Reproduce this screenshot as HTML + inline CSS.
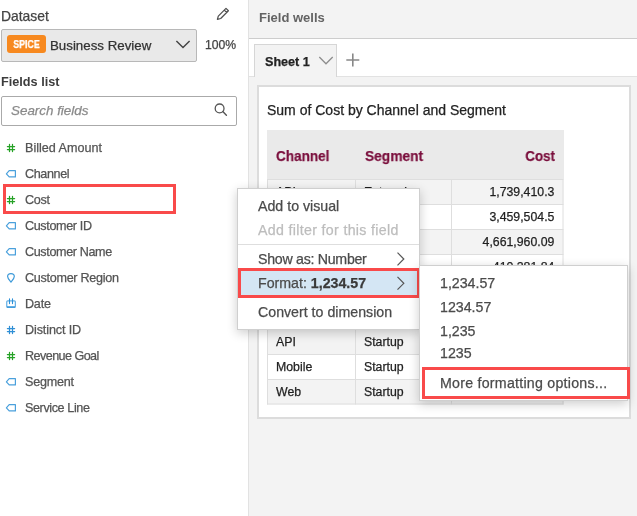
<!DOCTYPE html>
<html><head><meta charset="utf-8">
<style>
*{box-sizing:border-box;margin:0;padding:0}
html,body{width:637px;height:516px;overflow:hidden;background:#fff;font-family:"Liberation Sans",sans-serif}
.a,.fi,.cm,.hd,.td{will-change:transform;-webkit-text-stroke:0.25px currentColor}
.a{position:absolute;white-space:pre;line-height:1}
svg{position:absolute;overflow:visible}
#rp{position:absolute;left:249px;top:0;width:388px;height:516px;background:#f3f3f3}
.fi{position:absolute;left:25px;font-size:12.6px;margin-top:1px;color:#545454;line-height:1;white-space:pre}
.cm{position:absolute;font-size:14.2px;color:#4b4b4b;line-height:1;white-space:pre}
.hd{position:absolute;font-size:14.8px;transform-origin:0 0;font-weight:bold;color:#7a0e3c;line-height:1;white-space:pre}
.td{position:absolute;font-size:12.3px;color:#1f1f1f;line-height:1;white-space:pre}
</style></head><body>

<!-- left panel -->
<div class="a" style="left:1px;top:10.1px;font-size:13.9px;color:#444">Dataset</div>
<svg style="left:0;top:0" width="637" height="516">
  <!-- pencil -->
  <path d="M217.4 19.4 L218.3 16.1 L226 8.4 L228.4 10.8 L220.7 18.5 Z M224.3 10.1 L226.7 12.5" fill="none" stroke="#505050" stroke-width="1.25" stroke-linejoin="round"/>
</svg>
<div style="position:absolute;left:1px;top:29px;width:196px;height:33px;background:#e9e9e9;border:1px solid #b8b8b8;border-radius:2px"></div>
<div style="position:absolute;left:7px;top:35px;width:39px;height:18px;background:#f7891f;border-radius:3px"></div>
<div class="a" style="left:6.5px;top:39.6px;width:39px;text-align:center;font-size:10.2px;font-weight:bold;color:#fff;transform:scaleX(0.87)">SPICE</div>
<div class="a" style="left:50px;top:38.75px;font-size:13.3px;color:#333">Business Review</div>
<svg style="left:0;top:0" width="637" height="516">
  <polyline points="176.4,41 183,47.4 189.6,41" fill="none" stroke="#444" stroke-width="1.45"/>
</svg>
<div class="a" style="left:205px;top:39.1px;font-size:12.2px;color:#444">100%</div>
<div class="a" style="left:1px;top:75.95px;font-size:12.7px;font-weight:bold;color:#3c3c3c;-webkit-text-stroke:0">Fields list</div>
<div style="position:absolute;left:1px;top:96px;width:236px;height:30px;background:#fff;border:1px solid #aaaaaa;border-radius:2px"></div>
<div class="a" style="left:11px;top:104.45px;font-size:13.4px;font-style:italic;color:#8a8a8a">Search fields</div>
<svg style="left:0;top:0" width="637" height="516">
  <circle cx="219.6" cy="108.4" r="4.4" fill="none" stroke="#555" stroke-width="1.3"/>
  <line x1="222.8" y1="111.6" x2="226.4" y2="115.2" stroke="#555" stroke-width="1.4" stroke-linecap="round"/>
</svg>

<!-- field list -->
<div class="fi" style="top:141.4px;letter-spacing:0px">Billed Amount</div>
<div class="fi" style="top:167.4px;letter-spacing:-0.38px">Channel</div>
<div class="fi" style="top:193.4px;letter-spacing:-0.3px">Cost</div>
<div class="fi" style="top:219.4px;letter-spacing:-0.37px">Customer ID</div>
<div class="fi" style="top:245.4px;letter-spacing:-0.37px">Customer Name</div>
<div class="fi" style="top:271.4px;letter-spacing:-0.29px">Customer Region</div>
<div class="fi" style="top:297.4px;letter-spacing:-0.23px">Date</div>
<div class="fi" style="top:323.4px;letter-spacing:-0.12px">Distinct ID</div>
<div class="fi" style="top:349.4px;letter-spacing:-0.56px">Revenue Goal</div>
<div class="fi" style="top:375.4px;letter-spacing:-0.23px">Segment</div>
<div class="fi" style="top:401.4px;letter-spacing:-0.4px">Service Line</div>
<svg style="left:0;top:0" width="637" height="516">
  <defs>
    <g id="hash"><path d="M2.5 0.4 V7.6 M5.5 0.4 V7.6 M0.4 2.5 H7.6 M0.4 5.5 H7.6" fill="none" stroke-width="1.25" stroke-linecap="round"/></g>
    <g id="tag"><path d="M9.3 0.6 H3.1 L0.3 3.7 L3.1 6.8 H9.3 Z" fill="none" stroke-width="1.2" stroke-linejoin="round"/></g>
  </defs>
  <use href="#hash" x="7" y="144" stroke="#26a226"/>
  <use href="#tag" x="6.1" y="170.1" stroke="#4aa0dc"/>
  <use href="#hash" x="7" y="196" stroke="#26a226"/>
  <use href="#tag" x="6.1" y="222.1" stroke="#4aa0dc"/>
  <use href="#tag" x="6.1" y="248.1" stroke="#4aa0dc"/>
  <!-- pin -->
  <path d="M10.95 282.1 C9.6 280.5 7.6 278.5 7.6 276.6 C7.6 274.6 9.1 273.6 10.95 273.6 C12.8 273.6 14.3 274.6 14.3 276.6 C14.3 278.5 12.3 280.5 10.95 282.1 Z" fill="none" stroke="#3d9ad9" stroke-width="1.2" stroke-linejoin="round"/>
  <!-- calendar -->
  <rect x="6.75" y="300.8" width="8.6" height="6.4" rx="1" fill="none" stroke="#62aee4" stroke-width="1.2"/>
  <line x1="6.8" y1="307.1" x2="15.3" y2="307.1" stroke="#2b90d8" stroke-width="1.3"/>
  <path d="M9.5 298.9 V303.6 M12.5 298.9 V303.6" stroke="#2b90d8" stroke-width="1.1" stroke-linecap="round"/>
  <use href="#hash" x="7" y="326" stroke="#2f8fd5"/>
  <use href="#hash" x="7" y="352" stroke="#26a226"/>
  <use href="#tag" x="6.1" y="378.1" stroke="#4aa0dc"/>
  <use href="#tag" x="6.1" y="404.1" stroke="#4aa0dc"/>
</svg>
<div style="position:absolute;left:3px;top:184px;width:173px;height:29.6px;border:3px solid #f94a4a"></div>

<!-- right panel -->
<div style="position:absolute;left:248px;top:0;width:1px;height:516px;background:#e2e2e2"></div>
<div id="rp"></div>
<div class="a" style="left:259.4px;top:11.0px;font-size:13px;font-weight:bold;color:#636363;-webkit-text-stroke:0">Field wells</div>
<div style="position:absolute;left:249px;top:38px;width:388px;height:1px;background:#cdcdcd"></div>
<div style="position:absolute;left:249px;top:39px;width:388px;height:38px;background:#fff;border-bottom:1px solid #e2e2e2"></div>
<div style="position:absolute;left:254px;top:44px;width:83px;height:33px;background:#f3f3f3;border:1px solid #d6d6d6;border-bottom:none"></div>
<div class="a" style="left:265.3px;top:56.35px;font-size:12.6px;font-weight:bold;color:#222">Sheet 1</div>
<svg style="left:0;top:0" width="637" height="516">
  <polyline points="319.3,57 326,63.8 332.7,57" fill="none" stroke="#8c8c8c" stroke-width="1.25"/>
  <path d="M346.3 60 H359.3 M352.8 53.5 V66.5" stroke="#888" stroke-width="1.6"/>
</svg>

<!-- visual card -->
<div style="position:absolute;left:257px;top:85px;width:374px;height:334px;background:#fff;border:2px solid #dcdcdc"></div>
<div class="a" style="left:267px;top:102.75px;font-size:14px;color:#232323">Sum of Cost by Channel and Segment</div>

<!-- table -->
<div style="position:absolute;left:267px;top:130px;width:296.5px;height:49px;background:#eaeaea"></div>
<div class="hd" style="left:276px;top:148.5px;transform:scaleX(0.915)">Channel</div>
<div class="hd" style="left:365px;top:148.5px;transform:scaleX(0.93)">Segment</div>
<div class="hd" style="left:451px;width:104px;text-align:right;top:148.5px;transform-origin:100% 0;transform:scaleX(0.9)">Cost</div>

<svg style="left:0;top:0" width="637" height="516" id="tbl">
  <rect x="267.5" y="179.5" width="296" height="25" fill="#f3f3f3"/>
  <rect x="267.5" y="229.5" width="296" height="25" fill="#f3f3f3"/>
  <rect x="267.5" y="279.5" width="296" height="25" fill="#f3f3f3"/>
  <rect x="267.5" y="329.5" width="296" height="25" fill="#f3f3f3"/>
  <rect x="267.5" y="379.5" width="296" height="25" fill="#f3f3f3"/>
  <path d="M267.5 179 V404.5 M355.5 179 V404.5 M451.5 179 V404.5 M563 179 V404.5
           M267 179.5 H563.5 M267 204.5 H563.5 M267 229.5 H563.5 M267 254.5 H563.5 M267 279.5 H563.5
           M267 304.5 H563.5 M267 329.5 H563.5 M267 354.5 H563.5 M267 379.5 H563.5 M267 404 H563.5" fill="none" stroke="#dedede" stroke-width="1"/>
</svg>
<div class="td" style="left:276.4px;top:186px">API</div>
<div class="td" style="left:364.4px;top:186px">Enterprise</div>
<div class="td" style="left:451.4px;width:103.4px;text-align:right;top:186px">1,739,410.3</div>
<div class="td" style="left:276.4px;top:211px">Mobile</div>
<div class="td" style="left:364.4px;top:211px">Enterprise</div>
<div class="td" style="left:451.4px;width:103.4px;text-align:right;top:211px">3,459,504.5</div>
<div class="td" style="left:276.4px;top:236px">Web</div>
<div class="td" style="left:364.4px;top:236px">Enterprise</div>
<div class="td" style="left:451.4px;width:103.4px;text-align:right;top:236px">4,661,960.09</div>
<div class="td" style="left:276.4px;top:261px">API</div>
<div class="td" style="left:364.4px;top:261px">SMB</div>
<div class="td" style="left:451.4px;width:103.4px;text-align:right;top:261px">410,281.84</div>
<div class="td" style="left:276.4px;top:286px">Mobile</div>
<div class="td" style="left:364.4px;top:286px">SMB</div>
<div class="td" style="left:451.4px;width:103.4px;text-align:right;top:286px">1,028,511.62</div>
<div class="td" style="left:276.4px;top:311px">Web</div>
<div class="td" style="left:364.4px;top:311px">SMB</div>
<div class="td" style="left:451.4px;width:103.4px;text-align:right;top:311px">2,047,902.15</div>
<div class="td" style="left:276.4px;top:336px">API</div>
<div class="td" style="left:364.4px;top:336px">Startup</div>
<div class="td" style="left:451.4px;width:103.4px;text-align:right;top:336px">302,118.6</div>
<div class="td" style="left:276.4px;top:361px">Mobile</div>
<div class="td" style="left:364.4px;top:361px">Startup</div>
<div class="td" style="left:451.4px;width:103.4px;text-align:right;top:361px">512,044.3</div>
<div class="td" style="left:276.4px;top:386px">Web</div>
<div class="td" style="left:364.4px;top:386px">Startup</div>
<div class="td" style="left:451.4px;width:103.4px;text-align:right;top:386px">695,210.77</div>

<!-- context menu -->
<div style="position:absolute;left:237px;top:188px;width:183px;height:142px;background:#fff;border:1px solid #cfcfcf;box-shadow:0 3px 10px rgba(0,0,0,0.2)"></div>
<div class="cm" style="left:258px;top:198.8px">Add to visual</div>
<div class="cm" style="left:258px;top:222.6px;color:#bdbdbd;letter-spacing:0.33px">Add filter for this field</div>
<div style="position:absolute;left:238px;top:244px;width:181px;height:1px;background:#dedede"></div>
<div class="cm" style="left:258px;top:252px;letter-spacing:-0.28px">Show as: Number</div>
<div style="position:absolute;left:238px;top:269px;width:181px;height:28px;background:#d4e6f4"></div>
<div class="cm" style="left:258px;top:276px">Format: <b style="color:#3a3a3a">1,234.57</b></div>
<div class="cm" style="left:258px;top:305.4px">Convert to dimension</div>
<svg style="left:0;top:0" width="637" height="516">
  <polyline points="397.5,252.6 403.8,259 397.5,265.4" fill="none" stroke="#555" stroke-width="1.2"/>
  <polyline points="397.5,276.9 403.8,283.3 397.5,289.7" fill="none" stroke="#555" stroke-width="1.2"/>
</svg>
<div style="position:absolute;left:238px;top:268.2px;width:181.5px;height:29.6px;border:3px solid #f94a4a"></div>

<!-- submenu -->
<div style="position:absolute;left:419px;top:265px;width:209px;height:136px;background:#fff;border:1px solid #cfcfcf;box-shadow:0 3px 10px rgba(0,0,0,0.2)"></div>
<div class="cm" style="left:440px;top:276px">1,234.57</div>
<div class="cm" style="left:440px;top:299.5px">1234.57</div>
<div class="cm" style="left:440px;top:323.5px">1,235</div>
<div class="cm" style="left:440px;top:346.2px">1235</div>
<div class="cm" style="left:440px;top:376.4px;letter-spacing:0.25px">More formatting options...</div>
<div style="position:absolute;left:422px;top:367px;width:207.6px;height:31.5px;border:3px solid #f94a4a"></div>

</body></html>
